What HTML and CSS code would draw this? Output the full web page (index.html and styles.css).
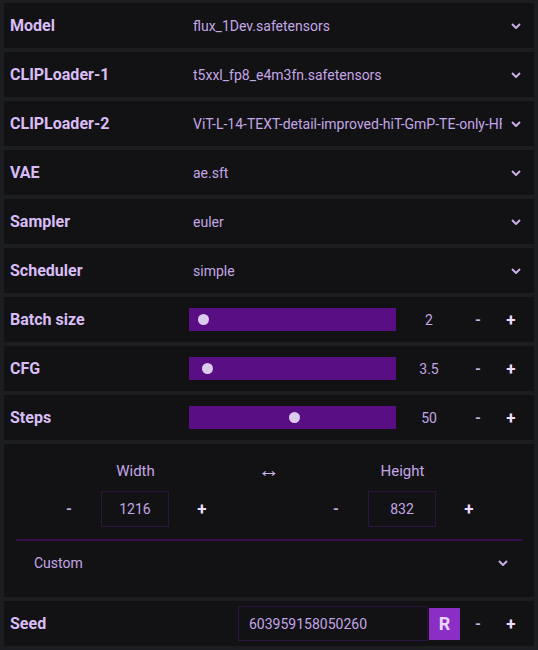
FILE: index.html
```html
<!DOCTYPE html>
<html>
<head>
<meta charset="utf-8">
<link rel="stylesheet" href="styles.css">
</head>
<body>
<div class="panel">
  <div class="row">
    <div class="label">Model</div>
    <div class="select"><span class="sel-text">flux_1Dev.safetensors</span><svg class="chev" width="10" height="6" viewBox="0 0 10 6"><polyline points="1,1 5,5 9,1" fill="none" stroke="#c9acea" stroke-width="2"/></svg></div>
  </div>
  <div class="row">
    <div class="label">CLIPLoader-1</div>
    <div class="select"><span class="sel-text">t5xxl_fp8_e4m3fn.safetensors</span><svg class="chev" width="10" height="6" viewBox="0 0 10 6"><polyline points="1,1 5,5 9,1" fill="none" stroke="#c9acea" stroke-width="2"/></svg></div>
  </div>
  <div class="row">
    <div class="label">CLIPLoader-2</div>
    <div class="select"><span class="sel-text">ViT-L-14-TEXT-detail-improved-hiT-GmP-TE-only-HF.safetensors</span><svg class="chev" width="10" height="6" viewBox="0 0 10 6"><polyline points="1,1 5,5 9,1" fill="none" stroke="#c9acea" stroke-width="2"/></svg></div>
  </div>
  <div class="row">
    <div class="label">VAE</div>
    <div class="select"><span class="sel-text">ae.sft</span><svg class="chev" width="10" height="6" viewBox="0 0 10 6"><polyline points="1,1 5,5 9,1" fill="none" stroke="#c9acea" stroke-width="2"/></svg></div>
  </div>
  <div class="row">
    <div class="label">Sampler</div>
    <div class="select"><span class="sel-text">euler</span><svg class="chev" width="10" height="6" viewBox="0 0 10 6"><polyline points="1,1 5,5 9,1" fill="none" stroke="#c9acea" stroke-width="2"/></svg></div>
  </div>
  <div class="row">
    <div class="label">Scheduler</div>
    <div class="select"><span class="sel-text">simple</span><svg class="chev" width="10" height="6" viewBox="0 0 10 6"><polyline points="1,1 5,5 9,1" fill="none" stroke="#c9acea" stroke-width="2"/></svg></div>
  </div>
  <div class="row">
    <div class="label">Batch size</div>
    <div class="slider"><span class="knob" style="left: 9px"></span></div>
    <div class="num">2</div>
    <div class="step minus">-</div>
    <div class="step plus">+</div>
  </div>
  <div class="row">
    <div class="label">CFG</div>
    <div class="slider"><span class="knob" style="left: 13px"></span></div>
    <div class="num">3.5</div>
    <div class="step minus">-</div>
    <div class="step plus">+</div>
  </div>
  <div class="row">
    <div class="label">Steps</div>
    <div class="slider"><span class="knob" style="left: 100px"></span></div>
    <div class="num">50</div>
    <div class="step minus">-</div>
    <div class="step plus">+</div>
  </div>
  <div class="section">
    <div class="dims">
      <div class="dim">
        <div class="dim-label">Width</div>
        <div class="dim-ctrl"><span class="step minus">-</span><div class="box">1216</div><span class="step plus">+</span></div>
      </div>
      <div class="swap">&#8596;</div>
      <div class="dim">
        <div class="dim-label">Height</div>
        <div class="dim-ctrl"><span class="step minus">-</span><div class="box">832</div><span class="step plus">+</span></div>
      </div>
    </div>
    <div class="divider"></div>
    <div class="preset"><span class="preset-text">Custom</span><svg class="chev" width="10" height="6" viewBox="0 0 10 6"><polyline points="1,1 5,5 9,1" fill="none" stroke="#c9acea" stroke-width="2"/></svg></div>
  </div>
  <div class="row">
    <div class="label seed-label">Seed</div>
    <div class="seed-box">603959158050260</div>
    <div class="rbtn">R</div>
    <div class="step minus">-</div>
    <div class="step plus">+</div>
  </div>
</div>
</body>
</html>
```
FILE: styles.css
```css
html, body {
  margin: 0;
  padding: 0;
  background: #1b1d21;
}
body {
  width: 538px;
  height: 650px;
  overflow: hidden;
  font-family: Roboto, "Liberation Sans", sans-serif;
}
.panel {
  display: flex;
  flex-direction: column;
  gap: 4px;
  padding: 3px 4px 0 4px;
}
.row {
  height: 45px;
  background: #121215;
  display: flex;
  align-items: center;
  padding-left: 6px;
  padding-right: 7px;
}
.label {
  width: 179px;
  flex: none;
  color: #d9bdf6;
  font-weight: 700;
  font-size: 16px;
}
.select {
  flex: 1;
  min-width: 0;
  display: flex;
  align-items: center;
  padding-left: 4px;
}
.sel-text {
  flex: 1;
  min-width: 0;
  overflow: hidden;
  white-space: nowrap;
  color: #c4a6e6;
  font-size: 14px;
}
.chev {
  flex: none;
  margin-left: 9px;
  margin-right: 6px;
}
.slider {
  position: relative;
  width: 207px;
  height: 23px;
  background: #5a0e83;
  flex: none;
}
.knob {
  position: absolute;
  top: 6px;
  width: 11px;
  height: 11px;
  border-radius: 50%;
  background: #dccbec;
}
.num {
  width: 66px;
  text-align: center;
  color: #c4a6e6;
  font-size: 14px;
  flex: none;
}
.step {
  width: 32px;
  text-align: center;
  flex: none;
  font-weight: 700;
  font-size: 17px;
}
.step.minus {
  color: #c9b2e0;
  font-size: 15px;
}
.step.plus {
  color: #eedcff;
  margin-left: 1px;
}
.section {
  height: 153px;
  background: #121215;
  display: flex;
  flex-direction: column;
}
.dims {
  display: flex;
  justify-content: center;
  padding-top: 18px;
}
.dim {
  width: 165px;
  display: flex;
  flex-direction: column;
  align-items: center;
}
.dim-label {
  height: 18px;
  line-height: 18px;
  color: #c4a6e6;
  font-size: 15px;
  margin-bottom: 11px;
}
.dim-ctrl {
  display: flex;
  align-items: center;
}
.dim-ctrl .minus {
  margin-right: 16px;
}
.dim-ctrl .plus {
  margin-left: 17px;
}
.box {
  width: 66px;
  height: 34px;
  border: 1px solid #2c1540;
  display: flex;
  align-items: center;
  justify-content: center;
  color: #c4a6e6;
  font-size: 14px;
}
.swap {
  width: 102px;
  text-align: center;
  color: #d0b8ea;
  font-size: 22px;
  line-height: 16px;
  height: 18px;
}
.divider {
  height: 2px;
  background: #35104d;
  margin: 12px 12px 0 12px;
}
.preset {
  display: flex;
  align-items: center;
  padding: 13px 0 0 30px;
  height: 18px;
}
.preset-text {
  flex: 1;
  color: #c4a6e6;
  font-size: 14px;
}
.preset .chev {
  margin-right: 26px;
}
.seed-label {
  width: 228px;
}
.seed-box {
  width: 178px;
  height: 33px;
  border: 1px solid #2c1540;
  display: flex;
  align-items: center;
  padding-left: 10px;
  color: #c4a6e6;
  font-size: 14px;
  flex: none;
}
.rbtn {
  width: 31px;
  height: 32px;
  background: #8a2ec6;
  display: flex;
  align-items: center;
  justify-content: center;
  color: #ead8ff;
  font-weight: 700;
  font-size: 18px;
  flex: none;
  margin-left: 1px;
  margin-right: 2px;
}
```
